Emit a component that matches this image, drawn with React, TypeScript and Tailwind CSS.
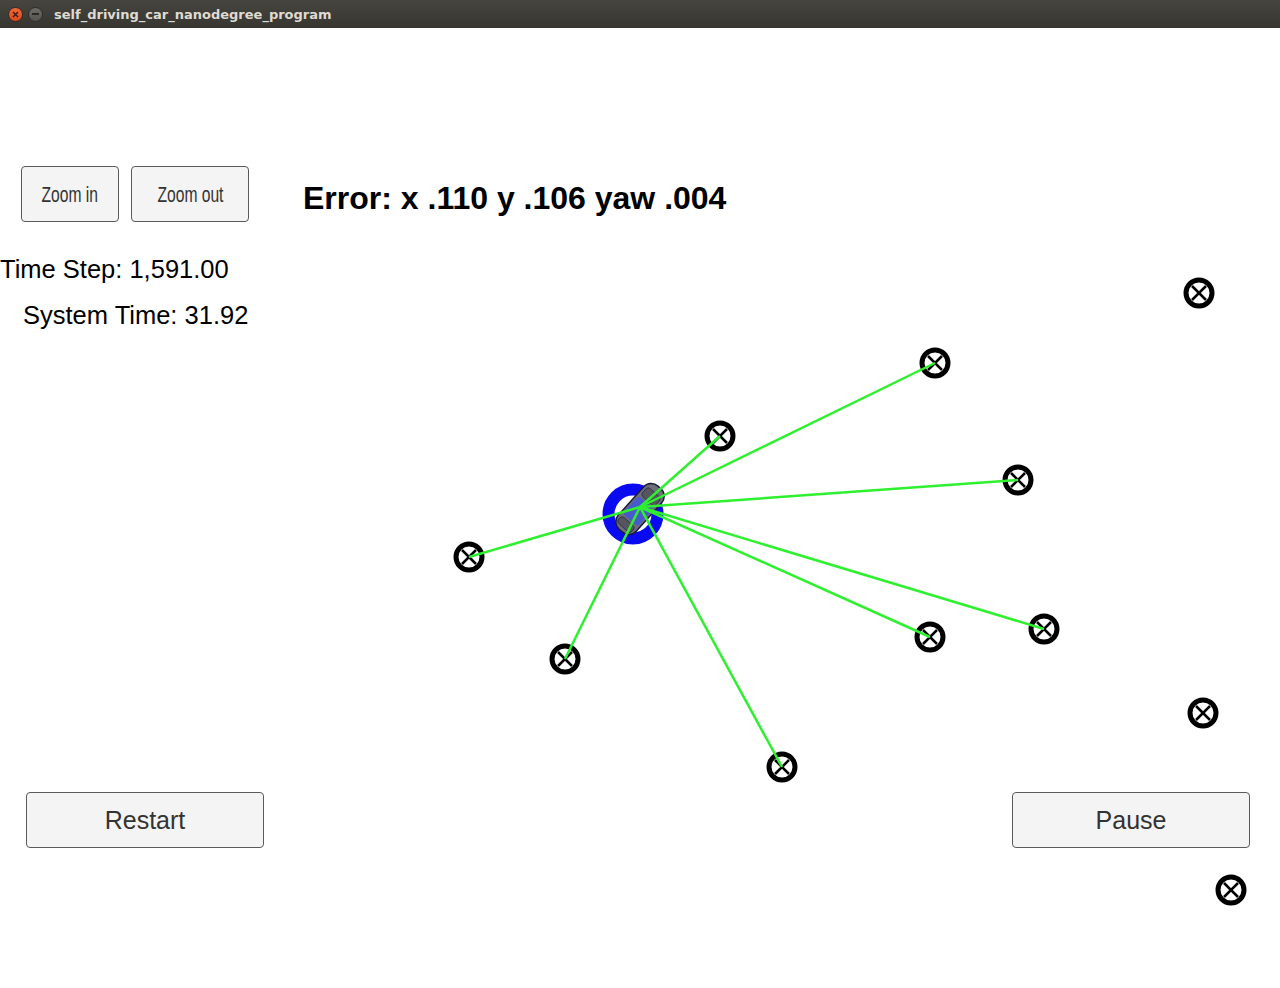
import React from "react";

const landmarks: [number, number][] = [
  [1199, 293],
  [935, 363],
  [720, 436],
  [1018, 480],
  [469, 557],
  [565, 659],
  [930, 637],
  [1044, 629],
  [1203, 713],
  [782, 767],
  [1231, 890],
];

const observed: [number, number][] = [
  [935, 363],
  [720, 436],
  [1018, 480],
  [469, 557],
  [565, 659],
  [930, 637],
  [1044, 629],
  [782, 767],
];

const ORIGIN: [number, number] = [640, 507];

function Landmark({ x, y }: { x: number; y: number }) {
  const d = 7;
  return (
    <g>
      <circle cx={x} cy={y} r={13} fill="white" stroke="black" strokeWidth={5} />
      <line x1={x - d} y1={y - d} x2={x + d} y2={y + d} stroke="black" strokeWidth={2.5} />
      <line x1={x - d} y1={y + d} x2={x + d} y2={y - d} stroke="black" strokeWidth={2.5} />
    </g>
  );
}

function Canvas() {
  return (
    <svg
      className="absolute inset-0 pointer-events-none"
      width={1280}
      height={960}
      viewBox="0 28 1280 960"
    >
      {landmarks.map(([x, y], i) => (
        <Landmark key={i} x={x} y={y} />
      ))}
      {/* vehicle ring */}
      <circle cx={633} cy={514} r={24.5} fill="none" stroke="#0a0af0" strokeWidth={12} />
      {/* car body */}
      <g transform="translate(640 509) rotate(-48)">
        <rect x={-29} y={-12} width={58} height={24} rx={10} fill="#6e6e7a" stroke="#1a1a3a" strokeWidth={1.5} />
        <rect x={-15} y={-10} width={24} height={20} rx={4} fill="#3f55e0" opacity={0.8} />
        <rect x={11} y={-9} width={11} height={18} rx={3} fill="#55555f" stroke="#2a2a44" strokeWidth={0.8} />
        <rect x={-25} y={-9} width={8} height={18} rx={3} fill="#55555f" stroke="#2a2a44" strokeWidth={0.8} />
      </g>
      {observed.map(([x, y], i) => (
        <line
          key={i}
          x1={ORIGIN[0]}
          y1={ORIGIN[1]}
          x2={x}
          y2={y}
          stroke="#2ef02e"
          strokeWidth={2.5}
        />
      ))}
    </svg>
  );
}

function Btn({
  children,
  className,
}: {
  children: React.ReactNode;
  className: string;
}) {
  return (
    <div
      className={
        "flex items-center justify-center rounded-[4px] border border-[#5a5a5a] bg-[#f4f4f4] text-[#333333] " +
        className
      }
    >
      {children}
    </div>
  );
}

export default function App() {
  return (
    <div
      className="w-[1280px] h-[988px] bg-white flex flex-col overflow-hidden"
      style={{ fontFamily: '"Liberation Sans", Arial, sans-serif' }}
    >
      {/* title bar */}
      <div className="h-[28px] flex items-center bg-gradient-to-b from-[#46453f] to-[#36352f] shrink-0">
        <div className="ml-[8px] w-[15px] h-[15px] rounded-full bg-gradient-to-b from-[#f0693a] to-[#d84a1c] border border-[#3a2a20] flex items-center justify-center">
          <svg width="7" height="7" viewBox="0 0 7 7">
            <path d="M1 1 L6 6 M6 1 L1 6" stroke="#3a1a10" strokeWidth="1.4" />
          </svg>
        </div>
        <div className="ml-[5px] w-[15px] h-[15px] rounded-full bg-gradient-to-b from-[#6d6c67] to-[#55544f] border border-[#2e2d29] flex items-center justify-center">
          <div className="w-[7px] h-[1.5px] bg-[#2a2926]" />
        </div>
        <div
          className="ml-[11px] text-[13px] font-bold text-[#dfdbd2] leading-none"
          style={{ fontFamily: '"DejaVu Sans", sans-serif' }}
        >
          self_driving_car_nanodegree_program
        </div>
      </div>

      {/* main */}
      <div className="relative flex-1 flex flex-col">
        <Canvas />

        <div className="relative flex items-center mt-[138px] pl-[21px]">
          <Btn className="w-[98px] h-[56px]">
            <span className="inline-block text-[22px] scale-x-[0.71]">Zoom in</span>
          </Btn>
          <Btn className="ml-[12px] w-[118px] h-[56px]">
            <span className="inline-block text-[22px] scale-x-[0.71]">Zoom out</span>
          </Btn>
          <div className="ml-[54px] mt-[8px] text-[32px] font-bold text-black leading-none">
            Error: x .110 y .106 yaw .004
          </div>
        </div>

        <div className="relative mt-[33px] text-[25.5px] leading-[28px] text-black">
          Time Step: 1,591.00
        </div>
        <div className="relative mt-[18px] pl-[23px] text-[25.5px] leading-[28px] text-black">
          System Time: 31.92
        </div>

        <div className="relative mt-auto mb-[140px] flex justify-between pl-[26px] pr-[30px]">
          <Btn className="w-[238px] h-[56px] text-[25px] pt-[2px]">Restart</Btn>
          <Btn className="w-[238px] h-[56px] text-[25px] pt-[2px]">Pause</Btn>
        </div>
      </div>
    </div>
  );
}
